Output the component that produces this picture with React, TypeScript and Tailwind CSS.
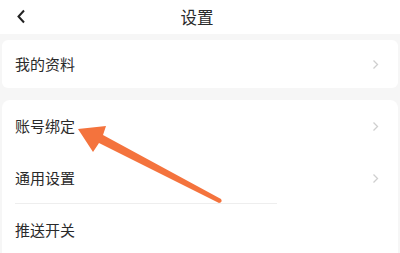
import React from 'react';

const font = { fontFamily: '"Noto Sans CJK SC", "Noto Sans", sans-serif' };

function Chevron() {
  return (
    <svg width="7" height="11" viewBox="0 0 7 11" className="shrink-0">
      <path d="M1.5 1.5 L5.5 5.5 L1.5 9.5" fill="none" stroke="#cfcfcf" strokeWidth="1.3" />
    </svg>
  );
}

function Row({ label, arrow = true, h }: { label: string; arrow?: boolean; h: string }) {
  return (
    <div className={`flex items-center justify-between pl-[13px] pr-[19px] ${h}`}>
      <span className="text-[15px] text-[#2a2a2a]">{label}</span>
      {arrow && <Chevron />}
    </div>
  );
}

export default function App() {
  return (
    <div className="relative w-[400px] h-[253px] overflow-hidden bg-[#f6f6f6]" style={font}>
      <div className="relative flex h-[34px] items-center justify-center bg-white pr-[6px]">
        <svg width="11" height="15" viewBox="0 0 11 15" className="absolute left-[16px] top-[9px]">
          <path d="M8 1.5 L2.5 7.5 L8 13.5" fill="none" stroke="#222" strokeWidth="2" />
        </svg>
        <span className="text-[16.5px] text-[#2a2a2a]">设置</span>
      </div>
      <div className="mx-[2px] mt-[6px] rounded-[6px] bg-white">
        <Row label="我的资料" h="h-[48px]" />
      </div>
      <div className="mx-[2px] mt-[12px] rounded-t-[8px] bg-white">
        <Row label="账号绑定" h="h-[53px]" />
        <Row label="通用设置" h="h-[50px]" />
        <div className="ml-[13px] h-px w-[262px] bg-[#eeeeee]" />
        <Row label="推送开关" h="h-[52px]" arrow={false} />
      </div>
      <svg className="absolute left-0 top-0" width="400" height="253" viewBox="0 0 400 253">
        <path
          d="M78 129 L106 126 L103 135 L221 199 Q223 202 219 203 L99 143 L93 152 Z"
          fill="#f4733d"
        />
      </svg>
    </div>
  );
}
